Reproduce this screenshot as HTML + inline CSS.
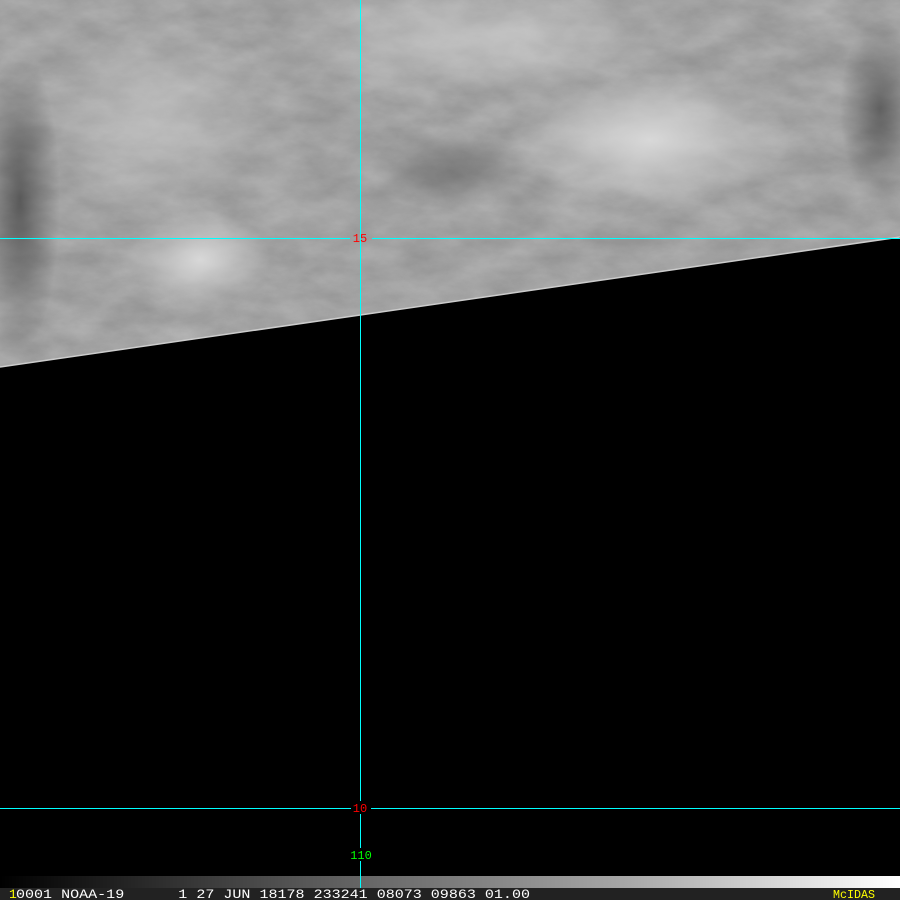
<!DOCTYPE html>
<html><head><style>
html,body{margin:0;padding:0;background:#000;width:900px;height:900px;overflow:hidden}
svg{display:block}
text{font-family:"Liberation Mono",monospace}
</style></head><body>
<svg width="900" height="900" viewBox="0 0 900 900" xmlns="http://www.w3.org/2000/svg">
<defs>
<linearGradient id="bar" x1="0" x2="1" y1="0" y2="0">
<stop offset="0" stop-color="#000"/><stop offset="0.35" stop-color="#5a5a5a"/><stop offset="0.7" stop-color="#a8a8a8"/><stop offset="1" stop-color="#fff"/>
</linearGradient>
<clipPath id="cl"><polygon points="0,0 900,0 900,237 0,367"/></clipPath>
<filter id="tx" x="0" y="0" width="100%" height="100%">
<feTurbulence type="fractalNoise" baseFrequency="0.02 0.04" numOctaves="5" seed="7"/>
<feColorMatrix type="matrix" values="0 0 0 0 0.55  0 0 0 0 0.55  0 0 0 0 0.55  1.2 0 0 0 -0.2"/>
</filter>
<radialGradient id="b1"><stop offset="0" stop-color="#d8d8d8"/><stop offset="1" stop-color="#d8d8d8" stop-opacity="0"/></radialGradient>
<radialGradient id="d1"><stop offset="0" stop-color="#3a3a3a"/><stop offset="1" stop-color="#3a3a3a" stop-opacity="0"/></radialGradient>
</defs>
<g clip-path="url(#cl)">
<rect width="900" height="400" fill="#959595"/>
<rect width="900" height="400" filter="url(#tx)" opacity="0.7"/>
<ellipse cx="650" cy="140" rx="140" ry="70" fill="url(#b1)"/>
<ellipse cx="200" cy="260" rx="70" ry="50" fill="url(#b1)"/>
<ellipse cx="480" cy="40" rx="200" ry="60" fill="url(#b1)" opacity="0.6"/>
<ellipse cx="150" cy="120" rx="120" ry="100" fill="url(#b1)" opacity="0.5"/>
<ellipse cx="20" cy="200" rx="40" ry="150" fill="url(#d1)" opacity="0.7"/>
<ellipse cx="880" cy="110" rx="40" ry="90" fill="url(#d1)" opacity="0.6"/>
<ellipse cx="450" cy="170" rx="80" ry="40" fill="url(#d1)" opacity="0.4"/>
</g>
<line x1="0" y1="367" x2="900" y2="237" stroke="#ccc" stroke-width="1.5"/>
<line x1="360.5" y1="0" x2="360.5" y2="888" stroke="#00ffff" stroke-width="1"/>
<line x1="0" y1="238.5" x2="350" y2="238.5" stroke="#00ffff" stroke-width="1"/>
<line x1="372" y1="238.5" x2="900" y2="238.5" stroke="#00ffff" stroke-width="1"/>
<line x1="0" y1="808.5" x2="900" y2="808.5" stroke="#00ffff" stroke-width="1"/>
<text x="360" y="242" fill="#ff0000" font-size="12" text-anchor="middle">15</text>
<rect x="351" y="801" width="20" height="13" fill="#000"/>
<text x="360" y="812" fill="#ff0000" font-size="12" text-anchor="middle">10</text>
<rect x="348" y="848" width="25" height="13" fill="#000"/>
<text x="361" y="859" fill="#00ff00" font-size="12" text-anchor="middle">110</text>
<rect x="0" y="876" width="900" height="12" fill="url(#bar)"/>
<line x1="360.5" y1="876" x2="360.5" y2="888" stroke="#00ffff"/>
<rect x="0" y="888" width="900" height="12" fill="#222"/>
<text x="9" y="898" fill="#ffff00" font-size="13">1</text>
<text x="16" y="898" fill="#fff" font-size="13" textLength="514" lengthAdjust="spacingAndGlyphs" xml:space="preserve">0001 NOAA-19      1 27 JUN 18178 233241 08073 09863 01.00</text>
<text x="833" y="898" fill="#ffff00" font-size="12" textLength="42" lengthAdjust="spacingAndGlyphs">McIDAS</text>
</svg>
</body></html>
